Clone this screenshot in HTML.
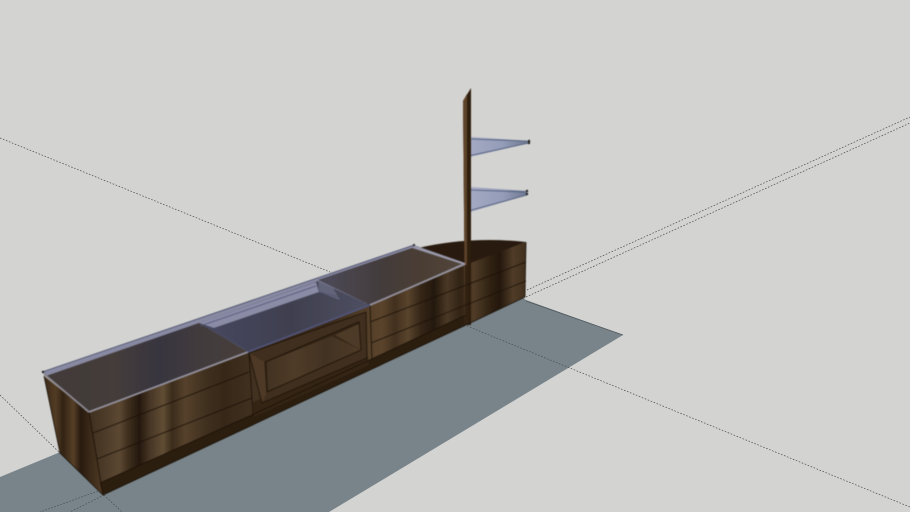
<!DOCTYPE html>
<html><head><meta charset="utf-8"><title>Model</title>
<style>html,body{margin:0;padding:0;width:910px;height:512px;overflow:hidden;background:#d3d3d1}svg{display:block}</style></head>
<body>
<svg width="910" height="512" viewBox="0 0 910 512" xmlns="http://www.w3.org/2000/svg">
<defs>
<linearGradient id="w" gradientUnits="userSpaceOnUse" x1="89" y1="0" x2="526" y2="0">
<stop offset="0" stop-color="#4a3721"/><stop offset=".03" stop-color="#57432b"/><stop offset=".07" stop-color="#6b5438"/>
<stop offset=".09" stop-color="#4a3620"/><stop offset=".115" stop-color="#2a1c0e"/><stop offset=".14" stop-color="#55402a"/>
<stop offset=".17" stop-color="#705a3a"/><stop offset=".19" stop-color="#46331c"/><stop offset=".22" stop-color="#644d30"/>
<stop offset=".27" stop-color="#4a3721"/><stop offset=".31" stop-color="#3f2e1a"/><stop offset=".38" stop-color="#4c3a24"/>
<stop offset=".45" stop-color="#44321d"/><stop offset=".55" stop-color="#43311c"/>
<stop offset=".63" stop-color="#5f482b"/><stop offset=".67" stop-color="#6a4f30"/><stop offset=".7" stop-color="#4e3921"/>
<stop offset=".73" stop-color="#684f31"/><stop offset=".76" stop-color="#3d2c18"/><stop offset=".79" stop-color="#2a1d0f"/>
<stop offset=".82" stop-color="#584228"/><stop offset=".85" stop-color="#3a2916"/><stop offset=".88" stop-color="#5d462b"/>
<stop offset=".92" stop-color="#362612"/><stop offset=".94" stop-color="#2a1c0e"/><stop offset=".97" stop-color="#5d462b"/><stop offset="1" stop-color="#4c3820"/>
</linearGradient>
<linearGradient id="e" gradientUnits="userSpaceOnUse" x1="44" y1="0" x2="103" y2="0">
<stop offset="0" stop-color="#46311b"/><stop offset=".2" stop-color="#604627"/><stop offset=".32" stop-color="#3c2915"/>
<stop offset=".5" stop-color="#644a2a"/><stop offset=".62" stop-color="#2e1f10"/><stop offset=".78" stop-color="#46311b"/><stop offset="1" stop-color="#5c4428"/>
</linearGradient>
<linearGradient id="t1" gradientUnits="userSpaceOnUse" x1="60" y1="0" x2="240" y2="0">
<stop offset="0" stop-color="#4b4543"/><stop offset=".3" stop-color="#504744"/><stop offset=".55" stop-color="#3f3e4b"/><stop offset=".75" stop-color="#4a4549"/><stop offset="1" stop-color="#524945"/>
</linearGradient>
<linearGradient id="t3" gradientUnits="userSpaceOnUse" x1="330" y1="0" x2="460" y2="0">
<stop offset="0" stop-color="#565564"/><stop offset=".4" stop-color="#4e4645"/><stop offset=".7" stop-color="#56493c"/><stop offset="1" stop-color="#5e5145"/>
</linearGradient>
<linearGradient id="t2" gradientUnits="userSpaceOnUse" x1="214" y1="0" x2="370" y2="0">
<stop offset="0" stop-color="#4f5370"/><stop offset=".5" stop-color="#484a5e"/><stop offset="1" stop-color="#5a5d74"/>
</linearGradient>
<linearGradient id="n" gradientUnits="userSpaceOnUse" x1="265" y1="0" x2="365" y2="0">
<stop offset="0" stop-color="#4d3a24"/><stop offset=".3" stop-color="#5c462c"/><stop offset=".6" stop-color="#4e3b25"/><stop offset="1" stop-color="#5d472c"/>
</linearGradient>
<linearGradient id="b" gradientUnits="userSpaceOnUse" x1="466" y1="0" x2="528" y2="0">
<stop offset="0" stop-color="#a6abc4"/><stop offset=".6" stop-color="#949cb8"/><stop offset="1" stop-color="#6d7790"/>
</linearGradient>
<filter id="s" x="-5%" y="-5%" width="110%" height="110%" color-interpolation-filters="sRGB"><feGaussianBlur stdDeviation=".6"/></filter>
<filter id="d" x="-5%" y="-5%" width="110%" height="110%" color-interpolation-filters="sRGB">
<feGaussianBlur stdDeviation=".6"/>
<feColorMatrix type="saturate" values=".9"/>
<feComponentTransfer><feFuncR type="linear" slope=".88"/><feFuncG type="linear" slope=".86"/><feFuncB type="linear" slope=".86"/></feComponentTransfer>
</filter>
</defs>

<polygon points="0,477 58,453 80,430 500,280 526,300 623,335 329,512 0,512" fill="#78848a"/>
<path d="M526,301L623,335" stroke="#50585c" stroke-width=".8" fill="none"/>

<g fill="none" stroke="#4a4c4c" stroke-width=".7" stroke-dasharray="1.6 1.6">
<path d="M0,138L330,272"/>
<path d="M527,290L910,117"/>
<path d="M526,297L910,123"/>
<path d="M467,326L910,507"/>
<path d="M0,395L60,453"/>
<path d="M104,489L40,512"/>
<path d="M104,495L70,512"/>
<path d="M104,495L122,512"/>
</g>

<g filter="url(#s)">
<path d="M471,137L529,141L529,143L466,158Z" fill="url(#b)"/>
<path d="M471,139L527,141M468,156L529,143" stroke="#4c5a78" stroke-width=".8" fill="none"/>
<path d="M470,187L527,191L527,195L467,213Z" fill="url(#b)"/>
<path d="M470,190L525,192M468,211L527,195" stroke="#4c5a78" stroke-width=".8" fill="none"/>
<circle cx="529" cy="141" r="1.2" fill="#222"/><circle cx="529" cy="143" r="1.2" fill="#222"/>
<circle cx="527" cy="191" r="1.2" fill="#222"/><circle cx="527" cy="194" r="1.2" fill="#222"/>
</g>

<g filter="url(#d)">
<path d="M418,248Q470,236 526,242L466,266Z" fill="#2f1f0f"/>
<polygon points="44,376 89,412 103,495 60,453" fill="url(#e)"/>
<polygon points="89,412 465,265 526,242 525,297 466,325 103,495" fill="url(#w)"/>
<polygon points="100,483 252,415 466,315 466,325 103,495" fill="#33230f"/>
<polygon points="253,402 368,357 369,365 254,417" fill="#3d2b16"/>
<polygon points="249,353 366,312 367,358 262,403" fill="#4b3720"/>
<polygon points="265,362 359,322 361,350 267,392" fill="#3e2c18"/>
<polygon points="267,362 332,336 361,350 268,392" fill="url(#n)"/>
<polygon points="335,335 359,324 361,350" fill="#5b452b"/>
<polygon points="249,353 265,362 267,392 262,403" fill="#5a4329"/>
<polygon points="463,101 471,88 471,325 465,325" fill="#37230f"/>
<polygon points="463,101 467,94 467,325 465,325" fill="#6e4f2e"/>
<g stroke="#1f1408" stroke-width=".8" fill="none">
<path d="M93,433L249,372"/><path d="M97,459L252,398"/>
<path d="M370,322L526,262"/><path d="M371,343L526,281"/>
<path d="M100,483L252,415L466,315"/>
<path d="M89,412L103,495"/><path d="M370,305L372,360"/>
<path d="M249,353L253,415"/><path d="M249,353L366,312L367,358L262,403Z"/><path d="M265,362L359,322L361,350L267,392Z"/>
<path d="M44,376L60,453L103,495"/>
<path d="M103,495L466,325L525,297L526,242"/>
</g>
<path d="M466,265L466,325" stroke="#2a1b0c" stroke-width="1.4" fill="none"/>
<polygon points="42,372 414,245 465,263 89,412" fill="#9aa0c0"/>
<polygon points="46,376 199,323 248,352 88,413" fill="url(#t1)"/>
<polygon points="199,323 318,281 370,305 248,352" fill="url(#t2)"/>
<polygon points="318,280 412,248 462,264 370,305" fill="url(#t3)"/>
<polygon points="199,323 316,282 319,292 214,328" fill="#9ca2c4"/>
<polygon points="318,281 319,292 340,300 333,288" fill="#6f7592"/>
<path d="M89,412L248,352" stroke="#a6a8b8" stroke-width="1.8" fill="none"/>
<path d="M248,352L370,305" stroke="#5c6290" stroke-width="1.8" fill="none"/>
<path d="M370,305L465,264" stroke="#a6a8b8" stroke-width="1.8" fill="none"/>
<path d="M44,374L89,412" stroke="#9a9ba6" stroke-width="1.8" fill="none"/>
<path d="M414,247L465,264" stroke="#b0b3c6" stroke-width="1.8" fill="none"/>
<path d="M42,372L414,245" stroke="#565d82" stroke-width=".9" fill="none"/>
<path d="M200,326L316,286" stroke="#5a6188" stroke-width=".7" fill="none"/>
<path d="M248,352L214,328M370,305L319,292" stroke="#54597a" stroke-width=".6" fill="none"/>
<circle cx="43" cy="372" r="1.2" fill="#222"/><circle cx="414" cy="245" r="1.1" fill="#333"/>
</g>
</svg>
</body></html>
